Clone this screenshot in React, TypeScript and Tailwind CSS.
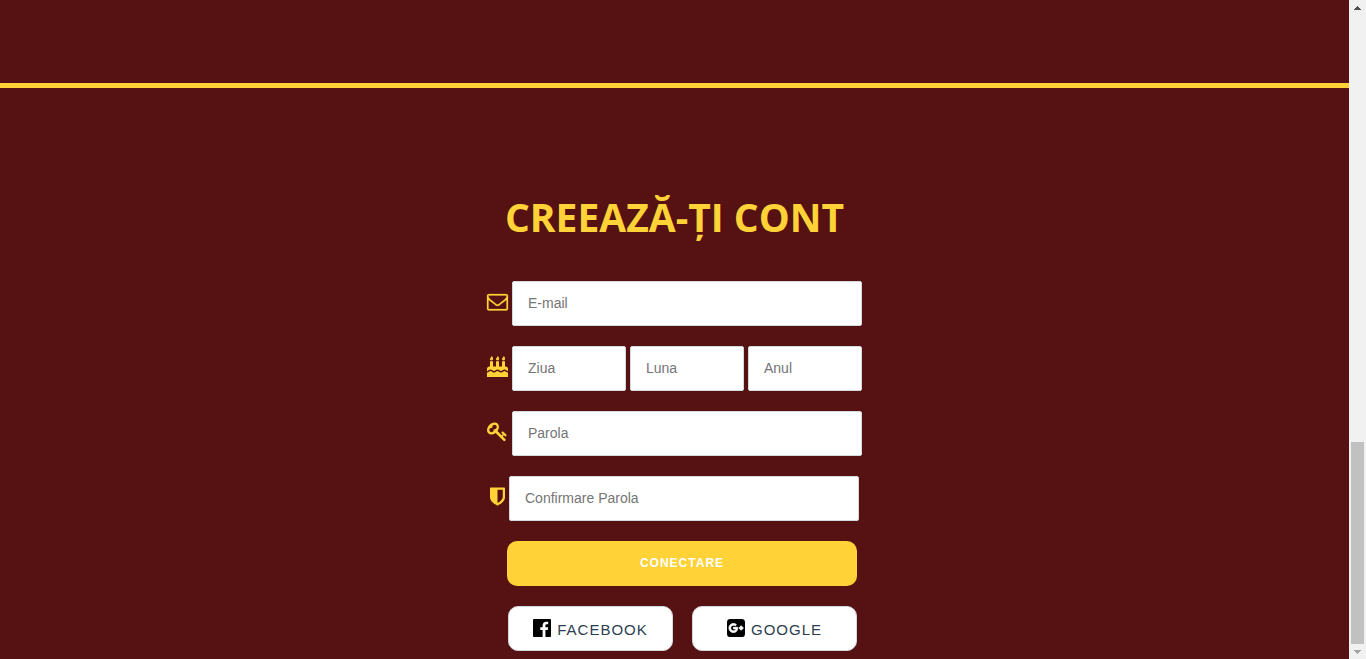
import type { InputHTMLAttributes, ReactNode } from "react";

function Glyph({ viewBox, d, className }: { viewBox: string; d: string; className: string }) {
  return (
    <svg viewBox={viewBox} className={`shrink-0 overflow-visible fill-current ${className}`} aria-hidden="true">
      <path d={d} />
    </svg>
  );
}

const envelope =
  "M1664 1504v-768q-32 36-69 66-268 206-426 338-51 43-83 67t-86.5 48.5-102.5 24.5h-2q-48 0-102.5-24.5t-86.5-48.5-83-67q-158-132-426-338-37-30-69-66v768q0 13 9.5 22.5t22.5 9.5h1472q13 0 22.5-9.5t9.5-22.5zm0-1051v-24.5l-.5-13-3-12.5-5.5-9-9-7.5-14-2.5h-1472q-13 0-22.5 9.5t-9.5 22.5q0 168 147 284 193 152 401 317 6 5 35 29.5t46 37.5 44.5 31.5 50.5 27.5 43 9h2q20 0 43-9t50.5-27.5 44.5-31.5 46-37.5 35-29.5q208-165 401-317 54-43 100.5-115.5t46.5-131.5zm128-37v1088q0 66-47 113t-113 47h-1472q-66 0-113-47t-47-113v-1088q0-66 47-113t113-47h1472q66 0 113 47t47 113z";
const candle =
  "q0 77-36 118.5t-92 41.5q-53 0-90.5-37.5t-37.5-90.5q0-29 9.5-51t23.5-34 31-28 31-31.5 23.5-44.5 9.5-67q38 0 83 74t45 150z";
const cake =
  "M1792 1408v384h-1792v-384q45 0 85-14t59-27.5 47-37.5q30-27 51.5-38t56.5-11q24 0 44 7t31 15 33 27q29 25 47 38t58 27 86 14q45 0 85-14.5t58-27 48-37.5q21-19 32.5-27t31-15 43.5-7q35 0 56.5 11t51.5 38q28 24 47 37.5t59 27.5 85 14 85-14 59-27.5 47-37.5q30-27 51.5-38t56.5-11q34 0 55.5 11t51.5 38q28 24 47 37.5t59 27.5 85 14zm0-320v192q-24 0-44-7t-31-15-33-27q-29-25-47-38t-58-27-85-14q-46 0-86 14t-58 27-47 38q-22 19-33 27t-31 15-44 7q-35 0-56.5-11t-51.5-38q-29-25-47-38t-58-27-86-14q-45 0-85 14.5t-58 27-48 37.5q-21 19-32.5 27t-31 15-43.5 7q-35 0-56.5-11t-51.5-38q-28-24-47-37.5t-59-27.5-85-14q-46 0-86 14t-58 27-47 38q-22 19-33 27t-31 15-44 7v-192q0-80 56-136t136-56h64v-448h256v448h256v-448h256v448h256v-448h256v448h64q80 0 136 56t56 136z" +
  "M512 224" + candle + "M1024 224" + candle + "M1536 224" + candle;
const key =
  "M832 512q0-80-56-136t-136-56-136 56-56 136q0 42 19 83-41-19-83-19-80 0-136 56t-56 136 56 136 136 56 136-56 56-136q0-42-19-83 41 19 83 19 80 0 136-56t56-136zm851 704q0 17-49 66t-66 49q-9 0-28.5-16t-36.5-33-38.5-40-24.5-26l-96 96 220 220q28 28 28 68 0 42-39 81t-81 39q-40 0-68-28l-671-671q-176 131-365 131-163 0-265.5-102.5t-102.5-265.5q0-160 95-313t248-248 313-95q163 0 265.5 102.5t102.5 265.5q0 189-131 365l355 355 96-96q-3-3-26-24.5t-40-38.5-33-36.5-16-28.5q0-17 49-66t66-49q13 0 23 10 6 6 46 44.5t82 79.5 86.5 86 73 78 28.5 41z";
const shield =
  "M1344 960v-640h-448v1137q119-63 213-137 235-184 235-360zm192-768v768q0 86-33.5 170.5t-83 150-118 127.5-126.5 103-121 77.5-89.5 49.5-42.5 20q-12 6-26 6t-26-6q-16-7-42.5-20t-89.5-49.5-121-77.5-126.5-103-118-127.5-83-150-33.5-170.5v-768q0-26 19-45t45-19h1152q26 0 45 19t19 45z";
const facebook =
  "M1579 128q35 0 60 25t25 60v1366q0 35-25 60t-60 25h-391v-595h199l30-232h-229v-148q0-56 23.5-84t91.5-28l122-1v-207q-63-9-178-9-136 0-217.5 80t-81.5 226v171h-200v232h200v595h-735q-35 0-60-25t-25-60v-1366q0-35 25-60t60-25h1366z";
const googlePlus =
  "M1045 905q0-26-6-64h-362v132h217q-3 24-16.5 50t-37.5 53-66.5 44.5-96.5 17.5q-99 0-169-71t-70-171 70-171 169-71q92 0 153 59l104-101q-108-100-257-100-160 0-272 112.5t-112 271.5 112 271.5 272 112.5q165 0 266.5-105t101.5-270zm345 46h109v-110h-109v-110h-110v110h-110v110h110v110h110v-110z";

function GoogleBadge() {
  return (
    <svg viewBox="128 128 1536 1536" className="size-[18px]" aria-hidden="true">
      <rect x="128" y="128" width="1536" height="1536" rx="288" fill="black" />
      <path d={googlePlus} fill="white" stroke="white" strokeWidth="70" />
    </svg>
  );
}

function Field(props: InputHTMLAttributes<HTMLInputElement>) {
  return (
    <input
      {...props}
      aria-label={props.placeholder}
      className="h-[45px] w-full min-w-0 flex-1 rounded-xs border border-[#d2d9dd] bg-white px-[15px] pb-[2px] text-sm text-[#2c3e50] outline-none placeholder:text-[#757575]"
    />
  );
}

function Row({ icon, children }: { icon: ReactNode; children: ReactNode }) {
  return (
    <div className="flex items-center justify-center gap-1">
      <span className="pb-[5px] text-[#ffd237]">{icon}</span>
      <div className="flex w-[350px] gap-1">{children}</div>
    </div>
  );
}

function SocialButton({ icon, children }: { icon: ReactNode; children: ReactNode }) {
  return (
    <button
      type="button"
      className="flex h-[45px] flex-1 items-center justify-center gap-[6px] rounded-[10px] border border-[#d2d9dd] bg-white pt-[3px] text-[15px] tracking-[1px] text-[#2c3e50]"
    >
      <span className="pb-[5px] text-black">{icon}</span>
      {children}
    </button>
  );
}

function ScrollRail() {
  return (
    <div className="flex w-[17px] shrink-0 flex-col items-center bg-[#f1f1f1]" aria-hidden="true">
      <svg viewBox="0 0 17 17" className="size-[17px]" shapeRendering="crispEdges">
        <path d="M8 6h1v1h1v1h1v1h1v1H5V9h1V8h1V7h1z" fill="#505050" />
      </svg>
      <div className="flex-[425]" />
      <div className="w-[13px] flex-[202] bg-[#c1c1c1]" />
      <svg viewBox="0 0 17 15" className="h-[15px] w-[17px]" shapeRendering="crispEdges">
        <path d="M5 6h7v1h-1v1h-1v1H9v1H8V9H7V8H6V7H5z" fill="#a3a3a3" />
      </svg>
    </div>
  );
}

export default function App() {
  return (
    <div className="flex h-screen overflow-hidden bg-[#561212] font-['Liberation_Sans',Arial,sans-serif]">
      <main className="min-w-0 flex-1">
        <div className="h-[88px] border-b-5 border-[#ffd237]" />
        <section className="pt-[99px]">
          <h1 className="mb-[34px] text-center font-['Open_Sans',sans-serif] text-[39px] leading-[60px] font-bold text-[#ffd237] uppercase">
            Creează-ți cont
          </h1>
          <form className="flex flex-col gap-5">
            <Row
              icon={
                <Glyph
                  viewBox="0 0 1792 1792"
                  d={envelope}
                  className="size-[21px] stroke-current stroke-[20px]"
                />
              }
            >
              <Field type="email" placeholder="E-mail" />
            </Row>
            <Row icon={<Glyph viewBox="0 0 1792 1792" d={cake} className="size-[21px]" />}>
              <Field type="text" placeholder="Ziua" />
              <Field type="text" placeholder="Luna" />
              <Field type="text" placeholder="Anul" />
            </Row>
            <Row icon={<Glyph viewBox="0 0 1792 1792" d={key} className="size-[21px]" />}>
              <Field type="password" placeholder="Parola" />
            </Row>
            <Row icon={<Glyph viewBox="256 0 1280 1792" d={shield} className="h-[21px] w-[15px]" />}>
              <Field type="password" placeholder="Confirmare Parola" />
            </Row>
            <div className="flex flex-col items-center gap-5 pl-[15px]">
              <button
                type="submit"
                className="h-[45px] w-[350px] rounded-[10px] bg-[#ffd237] pb-[2px] text-xs font-bold tracking-[1px] text-white uppercase"
              >
                Conectare
              </button>
              <div className="flex w-[350px] gap-[19px] pl-px">
                <SocialButton icon={<Glyph viewBox="128 128 1536 1536" d={facebook} className="size-[18px]" />}>
                  FACEBOOK
                </SocialButton>
                <SocialButton icon={<GoogleBadge />}>GOOGLE</SocialButton>
              </div>
            </div>
          </form>
        </section>
      </main>
      <ScrollRail />
    </div>
  );
}
